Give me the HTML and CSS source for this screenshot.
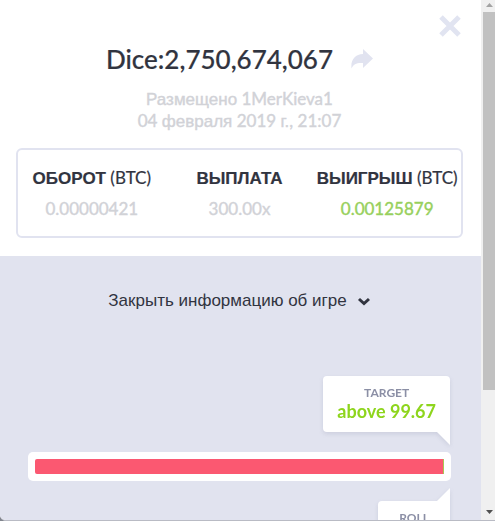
FILE: index.html
```
<!DOCTYPE html>
<html lang="ru">
<head>
	<meta charset="utf-8">
	<title>Dice:2,750,674,067</title>
	<link rel="stylesheet" href="styles.css">
</head>
<body>
	<div class="modal">
		<div class="content">
			<div class="summary">
				<button type="button" class="close" aria-label="Закрыть">
					<svg width="22" height="22" viewBox="0 0 22 22"><path d="M2 2L20 20M20 2L2 20" stroke="#e1e4f1" stroke-width="5" fill="none"/></svg>
				</button>
				<div class="title_row">
					<h1 class="title">Dice:2,750,674,067</h1>
					<button type="button" class="share" aria-label="Поделиться">
						<svg width="22" height="20" viewBox="0 0 22 20"><path d="M12 0L22 9.5L12 19V14C6 13.5 2.500 15 0.500 19.500C-0.500 11 4 5 12 5Z" fill="#e1e3f0"/></svg>
					</button>
				</div>
				<div class="posted">
					<div><span class="ru">Размещено</span> 1MerKieva1</div>
					<div>04 <span class="ru">февраля</span> 2019 <span class="ru">г.</span>, 21:07</div>
				</div>
				<div class="stats">
					<div class="stat">
						<div class="stat_name"><b class="ru">ОБОРОТ</b> (BTC)</div>
						<div class="stat_value">0.00000421</div>
					</div>
					<div class="stat">
						<div class="stat_name"><b class="ru">ВЫПЛАТА</b></div>
						<div class="stat_value">300.00x</div>
					</div>
					<div class="stat">
						<div class="stat_name"><b class="ru">ВЫИГРЫШ</b> (BTC)</div>
						<div class="stat_value win">0.00125879</div>
					</div>
				</div>
			</div>
			<div class="game">
				<button type="button" class="toggle">Закрыть информацию об игре
					<svg width="14" height="9" viewBox="0 0 14 9"><path d="M2 2L7 6.500L12 2" stroke="#31343f" stroke-width="3" fill="none"/></svg>
				</button>
				<div class="result">
					<div class="bubble target">
						<div class="bubble_name">TARGET</div>
						<div class="bubble_value">above 99.67</div>
					</div>
					<div class="track"><div class="bar"></div></div>
					<div class="bubble roll">
						<div class="bubble_name">ROLL</div>
					</div>
				</div>
			</div>
		</div>
		<div class="scrollbar">
			<svg class="arrow" width="7" height="4" viewBox="0 0 7 4"><path d="M0 4L3.500 0L7 4Z" fill="#a3a3a3"/></svg>
			<div class="thumb"></div>
			<svg class="arrow" width="7" height="4" viewBox="0 0 7 4"><path d="M0 0L3.500 4L7 0Z" fill="#505050"/></svg>
		</div>
	</div>
</body>
</html>
```

FILE: styles.css
```
* { box-sizing: border-box; }
body { margin: 0; background-color: #81858e; font-family: Lato, "Liberation Sans", sans-serif; color: #31343f; }
button { border: 0; padding: 0; background: none; color: inherit; cursor: pointer; }
svg { display: block; }
.ru { font-family: "Liberation Sans", sans-serif; }

.modal { display: flex; height: 100vh; overflow: hidden; border-bottom: 1px solid #b9bbc4; border-bottom-left-radius: 6px; background-color: #fff; }
.content { flex: 1; min-width: 0; overflow: hidden; }

.summary { position: relative; padding: 43px 18px 18px 16px; text-align: center; }
.close { position: absolute; top: 15px; right: 20px; }
.title_row { display: flex; justify-content: center; align-items: center; gap: 18px; height: 32px; }
.title { margin: 0; font-size: 26px; line-height: 32px; font-weight: 500; -webkit-text-stroke: 0.2px; white-space: nowrap; }
.posted { margin-top: 13px; font-size: 17px; line-height: 21px; color: #d1d2d7; -webkit-text-stroke: 0.4px; }
.stats { display: grid; grid-template-columns: repeat(3, 1fr); margin-top: 16px; padding: 17px 0 16px; border: 2px solid #e1e3f0; border-radius: 6px; }
.stat { min-width: 0; }
.stat_name { font-size: 17px; line-height: 22px; white-space: nowrap; -webkit-text-stroke: 0.2px; }
.stat_value { margin-top: 8px; font-size: 17px; line-height: 22px; color: #d1d2d7; -webkit-text-stroke: 0.4px; }
.win { color: #97d05c; }

.game { padding: 35px 30px 0 28px; background-color: #e1e3ef; }
.toggle { display: flex; justify-content: center; align-items: center; gap: 10px; width: 100%; font-family: "Liberation Sans", sans-serif; font-size: 17px; line-height: 20px; }
.result { display: flex; flex-direction: column; margin-top: 65px; }
.bubble { position: relative; align-self: flex-end; margin-right: 1px; border-radius: 4px; background-color: #fff; text-align: center; filter: drop-shadow(0 2px 2px rgba(90, 95, 130, 0.15)); }
.bubble::after { content: ""; position: absolute; right: 0; width: 13px; height: 13px; background-color: #fff; }
.bubble_name { font-size: 12px; line-height: 16px; font-weight: 700; color: #8b8fa5; }
.bubble_value { font-size: 18px; line-height: 20px; font-weight: 700; color: #8ed51d; }
.target { padding: 9px 14px 11px; border-bottom-right-radius: 0; }
.target::after { top: 100%; clip-path: polygon(0 0, 100% 0, 100% 100%); }
.track { margin: 20px 0; padding: 7px; border-radius: 5px; background-color: #fff; }
.bar { height: 15px; border-right: 1px solid #a8c852; border-radius: 2px 0 0 2px; background-color: #fb5871; }
.roll { padding: 9px 21px 11px; border-top-right-radius: 0; }
.roll::after { bottom: 100%; clip-path: polygon(0 100%, 100% 0, 100% 100%); }

.scrollbar { display: flex; flex-direction: column; align-items: center; width: 14px; padding: 3px 0 6px; border-left: 2px solid #f0f0f0; background-color: #f0f0f0; }
.thumb { width: 100%; height: 74%; margin: 5px 0 auto; background-color: #c1c1c1; }
```
